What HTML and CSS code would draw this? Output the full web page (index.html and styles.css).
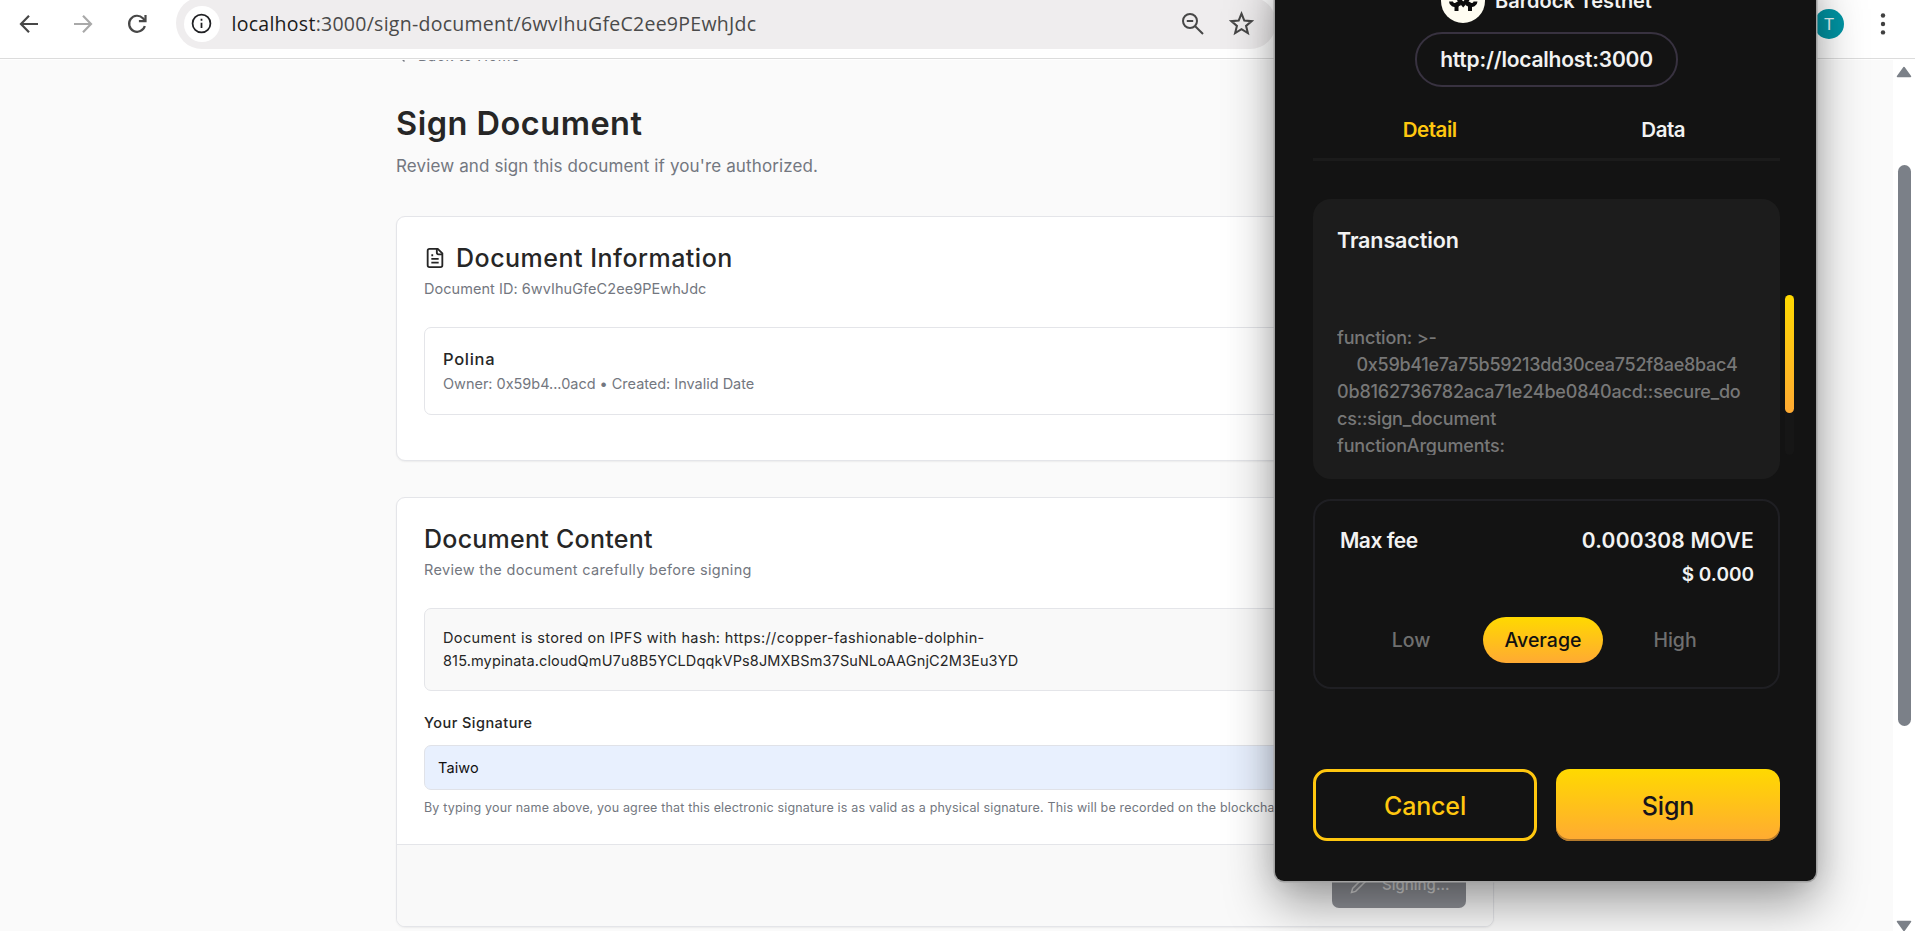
FILE: index.html
```html
<!DOCTYPE html>
<html lang="en">
<head>
<meta charset="utf-8">
<title>Sign Document</title>
<link rel="stylesheet" href="styles.css">
</head>
<body>
<div class="browser">
  <header class="toolbar">
    <nav class="nav-buttons">
      <svg class="nav-icon" viewBox="0 0 24 24"><path d="M21 12H4.500M12 3.800L4 12l8 8.200"/></svg>
      <svg class="nav-icon nav-icon-off" viewBox="0 0 24 24"><path d="M3 12h16.500M12 3.800l8 8.200-8 8.200"/></svg>
      <svg class="nav-icon" viewBox="0 0 24 24"><path d="M19.800 14a8 8 0 1 1-1.900-7.800l2.200 2.300"/><path d="M20.500 3v6.200h-6.600"/></svg>
    </nav>
    <div class="omnibox">
      <span class="site-info"><svg viewBox="0 0 24 24"><circle cx="12" cy="12" r="10.200"/><path d="M12 11v6.200M12 6.600v2.200"/></svg></span>
      <span class="url"><span class="host">localhost</span>:3000/sign-document/6wvIhuGfeC2ee9PEwhJdc</span>
      <span class="omni-actions">
        <svg class="zoom-icon" viewBox="0 0 24 24"><circle cx="9" cy="9" r="7"/><path d="M14.200 14.200L22 22M5.800 9h6.400"/></svg>
        <svg class="star-icon" viewBox="0 0 24 24"><path d="M12 2.600l2.700 6.600 7.100.5-5.400 4.600 1.700 6.900-6.100-3.800-6.100 3.800 1.700-6.900-5.400-4.600 7.100-.5z"/></svg>
      </span>
    </div>
    <span class="avatar">T</span>
    <svg class="menu-icon" viewBox="0 0 6 24"><circle cx="3" cy="3.500" r="2.200"/><circle cx="3" cy="12" r="2.200"/><circle cx="3" cy="20.400" r="2.200"/></svg>
  </header>

  <div class="viewport">
    <main class="page">
      <a class="back"><svg viewBox="0 0 24 24"><path d="M12 19l-7-7 7-7M19 12H5"/></svg><span>Back to Home</span></a>
      <h1>Sign Document</h1>
      <p class="lead">Review and sign this document if you're authorized.</p>

      <section class="card card-info">
        <h2 class="title-info"><svg viewBox="0 0 24 24"><path d="M15 2H6a2 2 0 0 0-2 2v16a2 2 0 0 0 2 2h12a2 2 0 0 0 2-2V7z"/><path d="M14 2v4a2 2 0 0 0 2 2h4M10 9H8M16 13H8M16 17H8"/></svg><span>Document Information</span></h2>
        <p class="desc">Document ID: 6wvIhuGfeC2ee9PEwhJdc</p>
        <div class="summary">
          <h3>Polina</h3>
          <p>Owner: 0x59b4...0acd • Created: Invalid Date</p>
        </div>
      </section>

      <section class="card card-content">
        <div class="card-body">
          <h2>Document Content</h2>
          <p class="desc desc-review">Review the document carefully before signing</p>
          <div class="content-box"><span class="line-intro">Document is stored on IPFS with hash: https://copper-fashionable-dolphin-</span><br><span class="line-hash">815.mypinata.cloudQmU7u8B5YCLDqqkVPs8JMXBSm37SuNLoAAGnjC2M3Eu3YD</span></div>
          <div class="field-label">Your Signature</div>
          <div class="field">Taiwo</div>
          <p class="hint">By typing your name above, you agree that this electronic signature is as valid as a physical signature. This will be recorded on the blockchain.</p>
        </div>
        <footer class="card-footer">
          <button class="signing"><svg viewBox="0 0 24 24"><path d="M17 3a2.850 2.830 0 1 1 4 4L7.500 20.500 2 22l1.500-5.500z"/></svg><span>Signing...</span></button>
        </footer>
      </section>
    </main>
    <div class="scrollbar">
      <svg viewBox="0 0 16 12"><path d="M8 1.500L14.500 10.500h-13z"/></svg>
      <span class="thumb"></span>
      <svg class="down" viewBox="0 0 16 12"><path d="M8 10.500L14.500 1.500h-13z"/></svg>
    </div>
  </div>
</div>

<aside class="wallet">
  <div class="network">
    <svg class="logo" viewBox="0 0 44 44"><circle class="disc" cx="22" cy="22" r="22"/><path d="M10 22.500a3.600 3.600 0 0 0 5.500 3v6.500M15.500 28q0-3 4-3.500M34.500 22.500a3.600 3.600 0 0 1-5.500 3v6.500M29 28q0-3-4-3.500M17.500 20l4.700 5.500 4.800-5.500"/></svg>
    <span>Bardock Testnet</span>
  </div>
  <div class="origin">http://localhost:3000</div>
  <div class="tabs"><span class="tab active">Detail</span><span class="tab">Data</span></div>
  <section class="tx">
    <h4>Transaction</h4>
    <div class="code">
      <div>function: &gt;-</div>
      <div class="indent">0x59b41e7a75b59213dd30cea752f8ae8bac4</div>
      <div>0b8162736782aca71e24be0840acd::secure_do</div>
      <div>cs::sign_document</div>
      <div>functionArguments:</div>
    </div>
    <span class="tx-track"><span class="tx-thumb"></span></span>
  </section>
  <section class="fee">
    <div class="fee-row"><span class="fee-label">Max fee</span><span class="fee-amount">0.000308 MOVE</span></div>
    <div class="fee-usd">$ 0.000</div>
    <div class="speeds"><span class="speed">Low</span><span class="speed chosen">Average</span><span class="speed">High</span></div>
  </section>
  <div class="actions">
    <button class="cancel">Cancel</button>
    <button class="confirm">Sign</button>
  </div>
</aside>
</body>
</html>
```

FILE: styles.css
```css
* { box-sizing: border-box; }
body { margin: 0; overflow: hidden; background: #fafafa; font-family: Inter, "Liberation Sans", sans-serif; color: #262626; }
h1, h2, h3, h4, p { margin: 0; font-weight: 500; white-space: nowrap; }
button { font: inherit; border: 0; padding: 0; }
svg { display: block; fill: none; stroke: currentColor; flex: none; }

.browser { width: 1915px; height: 931px; display: flex; flex-direction: column; }

/* Browser toolbar */
.toolbar { height: 59px; flex: none; display: flex; align-items: flex-start; background: #fff; border-bottom: 1px solid #dcdcdc; }
.nav-buttons { display: flex; gap: 30px; padding: 12px 0 0 17px; color: #474747; }
.nav-icon { width: 24px; height: 24px; stroke-width: 2.200; }
.nav-icon-off { color: #a9a9a9; }
.omnibox { width: 1100px; height: 52px; margin: -3px 0 0 27px; border-radius: 26px; background: #efedee; display: flex; align-items: center; padding: 1px 22px 0 7.500px; }
.site-info { width: 36px; height: 36px; border-radius: 50%; background: #fff; display: flex; align-items: center; justify-content: center; color: #202124; }
.site-info svg { width: 21px; height: 21px; stroke-width: 2; }
.url { margin-left: 12px; font-family: "Open Sans", "Noto Sans", sans-serif; font-size: 19.500px; line-height: 28px; letter-spacing: .27px; white-space: nowrap; color: #4a4a4a; }
.host { color: #1b1b1b; }
.omni-actions { margin-left: auto; display: flex; align-items: center; gap: 24px; color: #474747; }
.zoom-icon { width: 24px; height: 24px; stroke-width: 2; }
.star-icon { width: 25px; height: 25px; stroke-width: 2; }
.avatar { width: 30px; height: 30px; margin: 9px 0 0 538px; border-radius: 50%; background: #0094a3; color: #e8f6f7; font-family: Roboto, sans-serif; font-size: 17px; line-height: 30px; text-align: center; }
.menu-icon { width: 6px; height: 24px; margin: 12px 0 0 36px; fill: #404040; stroke: none; }

/* Page */
.viewport { flex: 1; display: flex; overflow: hidden; border-top: 1px solid #fff; }
.page { width: 1098px; margin-left: 396px; flex: none; display: flex; flex-direction: column; }
.back { display: flex; align-items: center; gap: 5px; height: 20px; margin-top: -14px; font-size: 14.500px; line-height: 20px; letter-spacing: .5px; color: #737780; }
.back svg { width: 17px; height: 17px; stroke-width: 2; }
h1 { margin-top: 38px; font-size: 32.500px; line-height: 40px; font-weight: 600; letter-spacing: .5px; }
.lead { margin-top: 10px; font-size: 17px; line-height: 24px; font-weight: 400; letter-spacing: .13px; color: #737780; }
.card { border: 1px solid #e4e5e9; border-radius: 9px; background: #fff; box-shadow: 0 1px 2px rgba(0, 0, 0, .06); }
.card-info { margin-top: 38px; height: 245px; padding: 26px 27px; flex: none; }
.card h2 { display: flex; align-items: center; gap: 10px; height: 30px; font-size: 25px; line-height: 30px; letter-spacing: .25px; }
.card h2.title-info { letter-spacing: .5px; }
.card h2 svg { width: 22px; height: 22px; stroke-width: 2; }
.desc { margin-top: 6px; font-size: 14.500px; line-height: 20px; font-weight: 400; letter-spacing: .05px; color: #737780; }
.desc-review { letter-spacing: .32px; }
.summary { margin-top: 28px; height: 88px; padding: 19px 18px; border: 1px solid #e4e5e9; border-radius: 7px; }
.summary h3 { font-size: 16.500px; line-height: 24px; letter-spacing: .7px; }
.summary p { margin-top: 3px; font-size: 14.500px; line-height: 20px; font-weight: 400; letter-spacing: -.02px; color: #737780; }
.card-content { margin-top: 36px; height: 430px; flex: none; display: flex; flex-direction: column; overflow: hidden; }
.card-body { height: 346px; padding: 26px 27px 0; }
.content-box { margin-top: 28px; height: 83px; padding: 17px 18px; border: 1px solid #e4e5e9; border-radius: 7px; background: #f9f9f9; font-size: 14.500px; line-height: 23px; white-space: nowrap; }
.line-intro { letter-spacing: .37px; }
.line-hash { letter-spacing: .13px; }
.field-label { margin-top: 22px; font-size: 14.500px; line-height: 20px; font-weight: 500; letter-spacing: .45px; }
.field { margin-top: 12px; height: 45px; padding: 12px 13px; border: 1px solid #e0e2e8; border-radius: 7px; background: #e8f0fe; font-size: 14.500px; line-height: 20px; letter-spacing: .1px; color: #111; }
.hint { margin-top: 9px; font-size: 12.500px; line-height: 18px; font-weight: 400; letter-spacing: .17px; color: #737780; }
.card-footer { flex: 1; display: flex; justify-content: flex-end; align-items: flex-end; padding: 0 27px 18px; border-top: 1px solid #e4e5e9; background: #f9f9f9; }
.signing { width: 134px; height: 45px; border-radius: 7px; background: #8e9096; color: #d4d4d4; display: flex; align-items: center; gap: 14px; padding: 0 0 2px 18px; font-size: 15px; line-height: 20px; font-weight: 500; }
.signing svg { width: 18px; height: 18px; stroke-width: 2; }

.scrollbar { width: 22px; margin-left: auto; background: #fff; display: flex; flex-direction: column; align-items: center; padding-top: 6px; }
.scrollbar svg { width: 16px; height: 12px; fill: #7b8088; stroke: #7b8088; stroke-width: 1.500; stroke-linejoin: round; }
.thumb { width: 13px; height: 561px; margin-top: 87px; border-radius: 7px; background: #7b8088; flex: none; }
.scrollbar .down { margin-top: 194px; }

/* Wallet popup, floating over the page */
.wallet { position: absolute; top: -30px; left: 1275px; width: 541px; height: 911px; padding: 9px 36px 0 38px; background: #131313; border-radius: 0 0 9px 9px; box-shadow: 0 0 0 1.500px #a2a2a2, 0 22px 50px rgba(0, 0, 0, .38), 0 0 26px rgba(0, 0, 0, .1); color: #f2f2f2; font-weight: 600; }
.network { display: flex; justify-content: center; align-items: center; gap: 10px; height: 44px; font-size: 20px; letter-spacing: -.05px; }
.logo { width: 44px; height: 44px; color: #0c0c0c; stroke-width: 4; }
.disc { fill: #fffdf2; stroke: none; }
.origin { width: 263px; height: 55px; margin: 9px auto 0; border: 2px solid #383240; border-radius: 27px; display: flex; align-items: center; justify-content: center; font-size: 21px; letter-spacing: -.22px; }
.tabs { height: 74px; display: grid; grid-template-columns: 1fr 1fr; border-bottom: 3px solid #1b1b1b; padding-top: 28px; font-size: 20.500px; line-height: 29px; letter-spacing: -.45px; text-align: center; }
.active { color: #ffc70f; }
.tx { position: relative; height: 280px; margin-top: 38px; padding: 26px 24px; border-radius: 18px; background: #1c1c1c; }
.tx h4 { font-size: 21.500px; line-height: 30px; font-weight: 600; letter-spacing: -.1px; }
.code { margin-top: 69px; height: 131px; overflow: hidden; font-size: 18px; line-height: 27px; font-weight: 500; letter-spacing: -.18px; color: #777; }
.indent { padding-left: 19.500px; letter-spacing: -.29px; }
.tx-track { position: absolute; right: -14px; top: 96px; width: 9px; height: 160px; border-radius: 5px; background: #161616; }
.tx-thumb { display: block; height: 118px; border-radius: 5px; background: linear-gradient(#ffd900, #ffaa33); }
.fee { height: 190px; margin-top: 20px; padding: 25px 24px 0 25px; border: 2px solid #1f1f23; border-radius: 18px; }
.fee-row { display: flex; justify-content: space-between; font-size: 21px; line-height: 30px; }
.fee-label { letter-spacing: -.5px; }
.fee-amount { letter-spacing: .2px; }
.fee-usd { margin-top: 5px; font-size: 19px; line-height: 28px; text-align: right; }
.speeds { margin: 28px 8px 0 0; display: grid; grid-template-columns: repeat(3, 120px); gap: 12px; justify-content: center; }
.speed { height: 46px; border-radius: 23px; font-size: 19.500px; line-height: 47px; font-weight: 500; color: #6f6f6f; text-align: center; }
.chosen { color: #111; background: linear-gradient(#ffd900, #ffaa33); }
.actions { display: grid; grid-template-columns: 1fr 1fr; gap: 19px; margin-top: 80px; }
.actions button { height: 72px; padding-top: 1px; border-radius: 14px; font-size: 25px; line-height: 30px; font-weight: 500; letter-spacing: -.15px; }
.actions .cancel { border: 3px solid #ffc70f; background: transparent; color: #ffc70f; }
.actions .confirm { background: linear-gradient(#ffd900, #ffaa33); color: #17141c; box-shadow: inset 0 -2px 0 #b47a2c; }
```
